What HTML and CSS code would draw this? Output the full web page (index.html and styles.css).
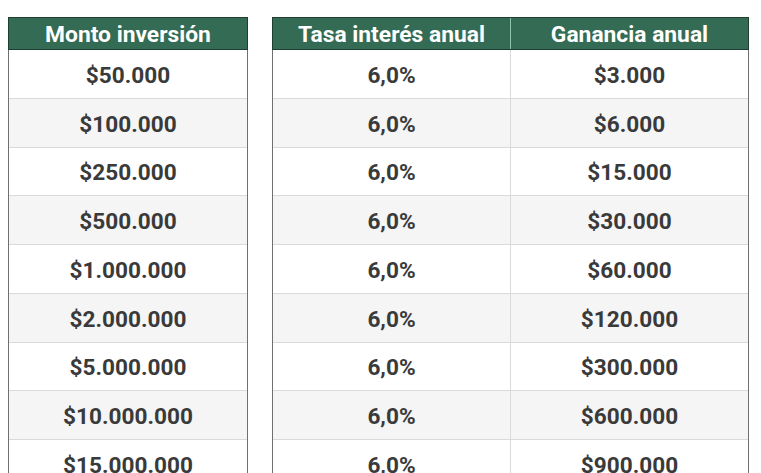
FILE: index.html
```html
<!DOCTYPE html>
<html lang="es">
<head>
<meta charset="utf-8">
<title>Inversión</title>
<link rel="stylesheet" href="styles.css">
</head>
<body>
<div class="wrap">
  <div class="tbl tbl-one">
    <div class="head"><div class="hc">Monto inversión</div></div>
    <div class="row"><div class="c">$50.000</div></div>
    <div class="row alt"><div class="c">$100.000</div></div>
    <div class="row"><div class="c">$250.000</div></div>
    <div class="row alt"><div class="c">$500.000</div></div>
    <div class="row"><div class="c">$1.000.000</div></div>
    <div class="row alt"><div class="c">$2.000.000</div></div>
    <div class="row"><div class="c">$5.000.000</div></div>
    <div class="row alt"><div class="c">$10.000.000</div></div>
    <div class="row"><div class="c">$15.000.000</div></div>
  </div>
  <div class="tbl tbl-two">
    <div class="head"><div class="hc">Tasa interés anual</div><div class="hc">Ganancia anual</div></div>
    <div class="row"><div class="c">6,0%</div><div class="c">$3.000</div></div>
    <div class="row alt"><div class="c">6,0%</div><div class="c">$6.000</div></div>
    <div class="row"><div class="c">6,0%</div><div class="c">$15.000</div></div>
    <div class="row alt"><div class="c">6,0%</div><div class="c">$30.000</div></div>
    <div class="row"><div class="c">6,0%</div><div class="c">$60.000</div></div>
    <div class="row alt"><div class="c">6,0%</div><div class="c">$120.000</div></div>
    <div class="row"><div class="c">6,0%</div><div class="c">$300.000</div></div>
    <div class="row alt"><div class="c">6,0%</div><div class="c">$600.000</div></div>
    <div class="row"><div class="c">6,0%</div><div class="c">$900.000</div></div>
  </div>
</div>
</body>
</html>
```
FILE: styles.css
```css
html, body {
  margin: 0;
  padding: 0;
  background: #ffffff;
  overflow: hidden;
}
body {
  font-family: Roboto, "Liberation Sans", Arial, sans-serif;
  color: #3a3a3a;
}
.wrap {
  display: flex;
  align-items: flex-start;
  gap: 24px;
  padding: 17px 0 0 8px;
}
.tbl {
  box-sizing: border-box;
  border-left: 1px solid #6f6f6f;
  border-right: 1px solid #6f6f6f;
}
.tbl-one { width: 240px; }
.tbl-two { width: 477px; }
.head {
  display: flex;
  height: 33px;
  box-sizing: border-box;
  background: #336b54;
  border: 1px solid #1e3f31;
  margin: 0 -1px;
}
.hc {
  flex: 1;
  display: flex;
  align-items: center;
  justify-content: center;
  color: #ffffff;
  font-weight: 700;
  font-size: 22.8px;
  padding-top: 1px;
}
.hc + .hc {
  border-left: 1px solid #8fc2ab;
}
.row {
  display: flex;
  height: 48.75px;
  box-sizing: border-box;
  border-bottom: 1px solid #dadada;
  background: #ffffff;
}
.row.alt {
  background: #f5f5f5;
}
.c {
  flex: 1;
  display: flex;
  align-items: center;
  justify-content: center;
  font-weight: 700;
  font-size: 22.6px;
  color: #3a3a3a;
  padding-top: 3px;
}
.c + .c {
  border-left: 1px solid #dadada;
}
```
